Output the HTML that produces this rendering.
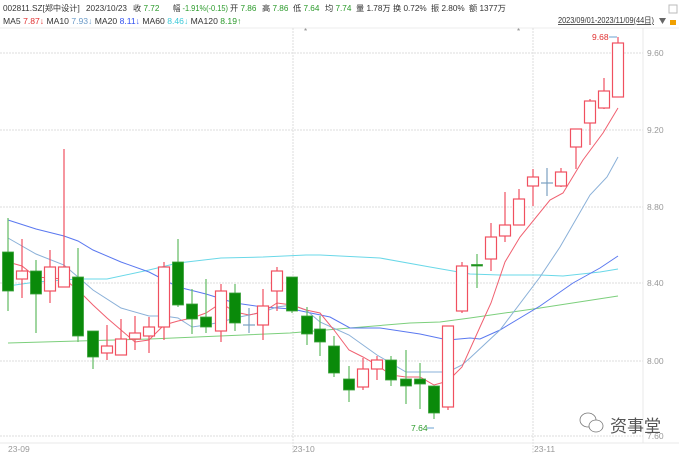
<!DOCTYPE html><html><head><meta charset="utf-8"><style>
body{margin:0;width:679px;height:454px;background:#fff;overflow:hidden;font-family:"Liberation Sans","Noto Sans CJK SC",sans-serif}
svg{position:absolute;left:0;top:0}
</style></head><body>
<svg width="679" height="454" viewBox="0 0 679 454" font-family="Liberation Sans, Noto Sans CJK SC, sans-serif">
<g font-size="8.2">
<text x="3" y="11" fill="#333">002811.SZ[郑中设计]</text>
<text x="86" y="11" fill="#333">2023/10/23</text>
<text x="133" y="11" fill="#333">收 <tspan fill="#2a9a2a">7.72</tspan></text>
<text x="173" y="11" fill="#333" textLength="55" lengthAdjust="spacingAndGlyphs">幅 <tspan fill="#2a9a2a">-1.91%(-0.15)</tspan></text>
<text x="230" y="11" fill="#333">开 <tspan fill="#2a9a2a">7.86</tspan></text>
<text x="262" y="11" fill="#333">高 <tspan fill="#2a9a2a">7.86</tspan></text>
<text x="293" y="11" fill="#333">低 <tspan fill="#2a9a2a">7.64</tspan></text>
<text x="325" y="11" fill="#333">均 <tspan fill="#2a9a2a">7.74</tspan></text>
<text x="356" y="11" fill="#333">量 1.78万</text>
<text x="393" y="11" fill="#333">换 0.72%</text>
<text x="431" y="11" fill="#333">振 2.80%</text>
<text x="469" y="11" fill="#333">额 1377万</text>
</g>
<text x="3" y="24" fill="#333" font-size="8.6">MA5 <tspan fill="#e03030">7.87↓</tspan> MA10 <tspan fill="#6a9ac8">7.93↓</tspan> MA20 <tspan fill="#3050f0">8.11↓</tspan> MA60 <tspan fill="#3ac8d8">8.46↓</tspan> MA120 <tspan fill="#2a9a2a">8.19↑</tspan></text>
<text x="558" y="23" fill="#333" font-size="8.2" textLength="96" lengthAdjust="spacingAndGlyphs" text-decoration="underline">2023/09/01-2023/11/09(44日)</text>
<path d="M659 18 l7 0 l-3.5 6z" fill="#666"/>
<rect x="670" y="20" width="6" height="5" fill="#f0a000"/>
<rect x="669" y="5" width="8" height="8" fill="none" stroke="#bbb"/>
<line x1="0" y1="28" x2="679" y2="28" stroke="#eee"/>
<text x="304" y="34" font-size="8" fill="#888">*</text><text x="517" y="34" font-size="8" fill="#888">*</text>
<g stroke="#ddd" stroke-dasharray="2,1">
<line x1="0" y1="53" x2="643" y2="53"/><line x1="0" y1="130" x2="643" y2="130"/><line x1="0" y1="207" x2="643" y2="207"/><line x1="0" y1="283" x2="643" y2="283"/><line x1="0" y1="361" x2="643" y2="361"/><line x1="0" y1="436" x2="643" y2="436"/>
<line x1="293" y1="28" x2="293" y2="454"/><line x1="533" y1="28" x2="533" y2="454"/>
</g>
<line x1="643" y1="28" x2="643" y2="443" stroke="#e8e8e8"/>
<line x1="0" y1="443" x2="679" y2="443" stroke="#e8e8e8"/>
<g font-size="8.5" fill="#999"><text x="647" y="56">9.60</text><text x="647" y="133">9.20</text><text x="647" y="210">8.80</text><text x="647" y="286">8.40</text><text x="647" y="364">8.00</text><text x="647" y="439">7.60</text>
<text x="8" y="452">23-09</text><text x="293" y="452">23-10</text><text x="534" y="452">23-11</text></g>
<g fill="none" stroke-width="1">
<polyline stroke="#7ccf7c" points="8,343 78,341 150,339 220,336 290,333 350,328 410,323 440,322 470,318 540,308 618,296"/>
<polyline stroke="#6ad8e8" points="8,286 36,282 78,279 107,279 149,270 178,263 221,258 263,257 306,255 320,255 380,258 430,267 470,274 500,275 540,275 563,276 600,272 618,269"/>
<polyline stroke="#5a78f0" points="8,220 36,229 64,236 78,241 93,250 121,262 149,272 178,287 206,294 235,303 263,307 292,309 306,312 330,317 350,328 380,328 420,334 448,340 470,338 480,339 500,330 540,306 573,283 600,268 618,256"/>
<polyline stroke="#8ab0d8" points="8,238 36,254 64,265 78,277 93,290 121,308 149,316 164,316 178,318 192,327 206,325 221,322 235,318 249,315 263,312 277,307 292,305 306,310 320,322 349,335 377,355 406,372 434,372 448,372 462,365 470,358 500,330 540,277 560,247 590,195 607,177 618,157"/>
<polyline stroke="#f06070" points="8,262 22,266 36,277 64,279 78,290 93,305 107,318 121,330 135,342 149,340 164,325 178,321 192,318 206,313 221,303 235,312 249,315 263,312 277,303 292,305 306,310 320,313 334,330 349,350 363,357 377,365 391,375 406,377 420,377 434,385 448,381 462,367 480,327 491,303 505,262 520,237 550,200 563,193 583,160 603,133 618,108"/>
</g>
<g stroke="#6cc06c" stroke-width="1.3">
<line x1="8" y1="218" x2="8" y2="311"/><line x1="36" y1="260" x2="36" y2="333"/><line x1="78" y1="248" x2="78" y2="342"/><line x1="93" y1="331" x2="93" y2="369"/><line x1="178" y1="239" x2="178" y2="307"/><line x1="192" y1="289" x2="192" y2="334"/><line x1="206" y1="279" x2="206" y2="333"/><line x1="235" y1="284" x2="235" y2="331"/><line x1="292" y1="277" x2="292" y2="313"/><line x1="307" y1="307" x2="307" y2="345"/><line x1="320" y1="316" x2="320" y2="356"/><line x1="334" y1="336" x2="334" y2="377"/><line x1="349" y1="366" x2="349" y2="402"/><line x1="391" y1="356" x2="391" y2="386"/><line x1="406" y1="350" x2="406" y2="404"/><line x1="420" y1="363" x2="420" y2="409"/><line x1="434" y1="386" x2="434" y2="419"/><line x1="477" y1="254" x2="477" y2="288"/>
</g>
<g fill="#0a8a0a" stroke="#3aa03a" stroke-width="0.8">
<rect x="2.5" y="252" width="11" height="39"/><rect x="30.5" y="271" width="11" height="23"/><rect x="72.5" y="277" width="11" height="59"/><rect x="87.5" y="331" width="11" height="26"/><rect x="172.5" y="262" width="11" height="43"/><rect x="186.5" y="304" width="11" height="15"/><rect x="200.5" y="317" width="11" height="10"/><rect x="229.5" y="293" width="11" height="30"/><rect x="286.5" y="277" width="11" height="34"/><rect x="301.5" y="316" width="11" height="18"/><rect x="314.5" y="329" width="11" height="13"/><rect x="328.5" y="346" width="11" height="27"/><rect x="343.5" y="379" width="11" height="11"/><rect x="385.5" y="360" width="11" height="20"/><rect x="400.5" y="379" width="11" height="7"/><rect x="414.5" y="379" width="11" height="5"/><rect x="428.5" y="386" width="11" height="27"/>
<rect x="471.5" y="264.5" width="11" height="1.5"/>
</g>
<g stroke="#7aa0c0" stroke-width="1.2"><line x1="249" y1="308" x2="249" y2="333"/><line x1="243" y1="325" x2="255" y2="325"/><line x1="547" y1="168" x2="547" y2="196"/><line x1="541" y1="183" x2="553" y2="183"/></g>
<g stroke="#f05060" stroke-width="1.2" fill="#fff">
<line x1="22" y1="239" x2="22" y2="298"/><rect x="16.5" y="271" width="11" height="8"/>
<line x1="50" y1="250" x2="50" y2="303"/><rect x="44.5" y="267" width="11" height="24"/>
<line x1="64" y1="149" x2="64" y2="287"/><rect x="58.5" y="267" width="11" height="20"/>
<line x1="107" y1="325" x2="107" y2="360"/><rect x="101.5" y="346" width="11" height="7"/>
<line x1="121" y1="319" x2="121" y2="355"/><rect x="115.5" y="339" width="11" height="16"/>
<line x1="135" y1="316" x2="135" y2="350"/><rect x="129.5" y="333" width="11" height="6"/>
<line x1="149" y1="317" x2="149" y2="353"/><rect x="143.5" y="327" width="11" height="9"/>
<line x1="164" y1="262" x2="164" y2="340"/><rect x="158.5" y="267" width="11" height="60"/>
<line x1="221" y1="284" x2="221" y2="342"/><rect x="215.5" y="291" width="11" height="40"/>
<line x1="263" y1="289" x2="263" y2="340"/><rect x="257.5" y="306" width="11" height="19"/>
<line x1="277" y1="267" x2="277" y2="311"/><rect x="271.5" y="271" width="11" height="20"/>
<line x1="363" y1="358" x2="363" y2="390"/><rect x="357.5" y="369" width="11" height="18"/>
<line x1="377" y1="356" x2="377" y2="380"/><rect x="371.5" y="360" width="11" height="9"/>
<line x1="448" y1="326" x2="448" y2="410"/><rect x="442.5" y="326" width="11" height="81"/>
<line x1="462" y1="262" x2="462" y2="313"/><rect x="456.5" y="266" width="11" height="45"/>
<line x1="491" y1="223" x2="491" y2="271"/><rect x="485.5" y="237" width="11" height="22"/>
<line x1="505" y1="192" x2="505" y2="242"/><rect x="499.5" y="225" width="11" height="11"/>
<line x1="519" y1="189" x2="519" y2="225"/><rect x="513.5" y="199" width="11" height="26"/>
<line x1="533" y1="169" x2="533" y2="206"/><rect x="527.5" y="177" width="11" height="9"/>
<line x1="561" y1="168" x2="561" y2="187"/><rect x="555.5" y="172" width="11" height="14"/>
<line x1="576" y1="129" x2="576" y2="169"/><rect x="570.5" y="129" width="11" height="18"/>
<line x1="590" y1="99" x2="590" y2="145"/><rect x="584.5" y="101" width="11" height="22"/>
<line x1="604" y1="78" x2="604" y2="109"/><rect x="598.5" y="91" width="11" height="17"/>
<line x1="618" y1="37" x2="618" y2="43"/><rect x="612.5" y="43" width="11" height="54"/>
</g>
<text x="592" y="40" font-size="8.5" fill="#e03030">9.68</text><line x1="609" y1="37" x2="617" y2="37" stroke="#6aa0d0"/>
<text x="411" y="431" font-size="8.5" fill="#2a9a2a">7.64</text><line x1="427" y1="428" x2="434" y2="428" stroke="#6aa0d0"/>
<g stroke="#777" fill="#fff" stroke-width="0.8"><ellipse cx="588" cy="420" rx="8" ry="7"/><ellipse cx="596" cy="426" rx="7" ry="6"/></g>
<text x="610" y="432" font-size="17" fill="#555">资事堂</text>
</svg>
</body></html>
